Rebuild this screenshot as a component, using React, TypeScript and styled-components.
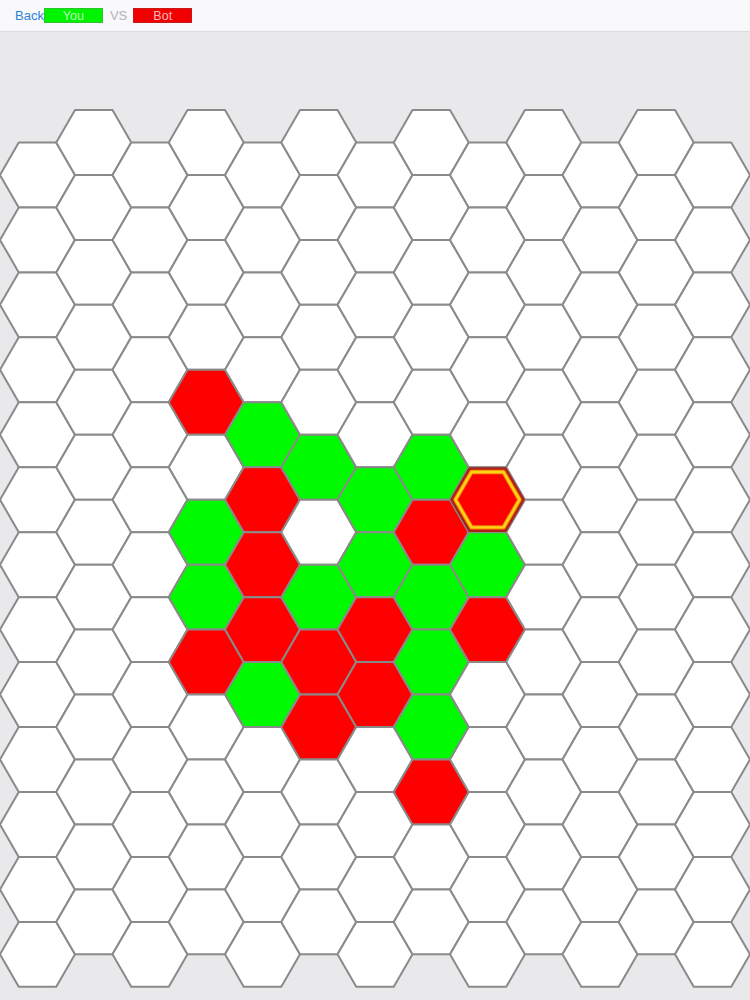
import React from "react";
import styled, { createGlobalStyle } from "styled-components";

type Owner = "you" | "bot";

const R = 37.5;
const H = Math.sqrt(3) * R;
const COLS = 13;
const ROWS = 13;

// "col,row" -> owner
const claimed: Record<string, Owner> = {
  "3,4": "bot",
  "4,4": "you",
  "5,5": "you",
  "7,5": "you",
  "4,5": "bot",
  "6,5": "you",
  "8,5": "bot",
  "3,6": "you",
  "7,6": "bot",
  "4,6": "bot",
  "6,6": "you",
  "8,6": "you",
  "3,7": "you",
  "5,7": "you",
  "7,7": "you",
  "4,7": "bot",
  "6,7": "bot",
  "8,7": "bot",
  "3,8": "bot",
  "5,8": "bot",
  "7,8": "you",
  "4,8": "you",
  "6,8": "bot",
  "5,9": "bot",
  "7,9": "you",
  "7,10": "bot",
};

const lastMove = "8,5";

const fills: Record<Owner | "empty", string> = {
  you: "#00fa00",
  bot: "#ff0000",
  empty: "#ffffff",
};

const hexPoints = (cx: number, cy: number, r: number) => {
  const h = (Math.sqrt(3) * r) / 2;
  return [
    [cx - r, cy],
    [cx - r / 2, cy - h],
    [cx + r / 2, cy - h],
    [cx + r, cy],
    [cx + r / 2, cy + h],
    [cx - r / 2, cy + h],
  ]
    .map((p) => p.map((n) => n.toFixed(2)).join(","))
    .join(" ");
};

const GlobalStyle = createGlobalStyle`
  html, body {
    margin: 0;
    padding: 0;
    background: #e9e8eb;
    font-family: "Liberation Sans", Arial, sans-serif;
  }
`;

const Page = styled.div`
  width: 750px;
  height: 1000px;
  overflow: hidden;
  background: #e9e8eb;
`;

const Header = styled.header`
  display: flex;
  align-items: center;
  height: 32px;
  padding-left: 15px;
  box-sizing: border-box;
  background: #f9f8fb;
  border-bottom: 1px solid #dedde1;
`;

const BackLink = styled.a`
  color: #2f82d6;
  font-size: 13px;
  cursor: pointer;
`;

const PlayerTag = styled.span<{ $color: string; $edge: string }>`
  display: inline-flex;
  align-items: center;
  justify-content: center;
  width: 59px;
  height: 15px;
  box-sizing: border-box;
  background: ${(p) => p.$color};
  border: 1px solid ${(p) => p.$edge};
  color: rgba(255, 255, 255, 0.72);
  font-size: 12.5px;
`;

const Versus = styled.span`
  color: #b3b2b8;
  font-size: 13px;
  margin: 0 6px 0 7px;
`;

const BoardArea = styled.main`
  padding-top: 78px;
`;

const Board = styled.svg`
  display: block;
  overflow: visible;
`;

const Cell = styled.polygon<{ $fill: string }>`
  fill: ${(p) => p.$fill};
  stroke: #8a8a8a;
  stroke-width: 2;
  stroke-linejoin: round;
`;

const LastMoveEdge = styled.polygon`
  fill: #ff0000;
  stroke: #a8231c;
  stroke-width: 2.4;
  stroke-linejoin: round;
`;

const LastMoveGlow = styled.polygon`
  fill: none;
  stroke: #f08a00;
  stroke-width: 4.4;
  stroke-linejoin: round;
`;

const LastMoveRing = styled.polygon`
  fill: none;
  stroke: #ffd21a;
  stroke-width: 2.4;
  stroke-linejoin: round;
`;

const App = () => {
  const cells: React.ReactNode[] = [];
  let highlight: React.ReactNode = null;

  for (let c = 0; c < COLS; c++) {
    for (let r = 0; r < ROWS; r++) {
      const cx = R + 1.5 * R * c;
      const cy = c % 2 === 1 ? H / 2 + H * r : H + H * r;
      const key = `${c},${r}`;
      const owner = claimed[key];
      cells.push(
        <Cell
          key={key}
          points={hexPoints(cx, cy, R)}
          $fill={fills[owner ?? "empty"]}
        />
      );
      if (key === lastMove) {
        highlight = (
          <g key="last">
            <LastMoveEdge points={hexPoints(cx, cy, R - 1.5)} />
            <LastMoveGlow points={hexPoints(cx, cy, R - 5.5)} />
            <LastMoveRing points={hexPoints(cx, cy, R - 5.5)} />
          </g>
        );
      }
    }
  }

  return (
    <Page>
      <GlobalStyle />
      <Header>
        <BackLink>Back</BackLink>
        <PlayerTag $color="#00f400" $edge="#2bc42b">
          You
        </PlayerTag>
        <Versus>VS</Versus>
        <PlayerTag $color="#f00000" $edge="#c41a1a">
          Bot
        </PlayerTag>
      </Header>
      <BoardArea>
        <Board width={750} height={H * 13.5} viewBox={`0 0 750 ${H * 13.5}`}>
          {cells}
          {highlight}
        </Board>
      </BoardArea>
    </Page>
  );
};

export default App;
